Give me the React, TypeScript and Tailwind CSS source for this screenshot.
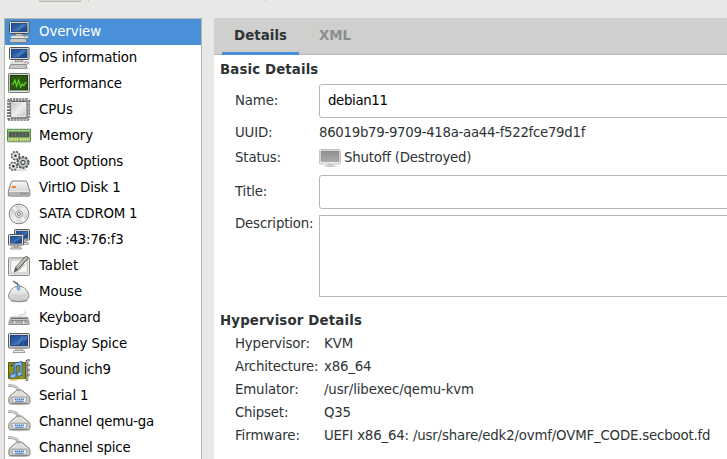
import type { ReactNode } from "react";

function Defs() {
  return (
    <svg className="absolute h-0 w-0" aria-hidden="true">
      <defs>
        <linearGradient id="screen" x1="0" y1="0" x2="1" y2="1">
          <stop offset="0" stopColor="#1c4a91" />
          <stop offset="0.45" stopColor="#2f62ab" />
          <stop offset="0.55" stopColor="#4377ba" />
          <stop offset="0.7" stopColor="#1e4c92" />
          <stop offset="1" stopColor="#204f96" />
        </linearGradient>
        <linearGradient id="metal" x1="0" y1="0" x2="1" y2="1">
          <stop offset="0" stopColor="#b5b5b5" />
          <stop offset="0.5" stopColor="#efefef" />
          <stop offset="1" stopColor="#bdbdbd" />
        </linearGradient>
        <linearGradient id="shell" x1="0" y1="0" x2="0" y2="1">
          <stop offset="0" stopColor="#fafafa" />
          <stop offset="1" stopColor="#c4c4c2" />
        </linearGradient>
        <linearGradient id="off" x1="0" y1="0" x2="0" y2="1">
          <stop offset="0" stopColor="#8f8f8f" />
          <stop offset="1" stopColor="#aaaaaa" />
        </linearGradient>
      </defs>
    </svg>
  );
}

const computer = (
  <>
    <path d="M9 13h6l1 3H8z" fill="#c4c4c0" stroke="#666" strokeWidth=".6" />
    <path d="M4 16h15v2.200H4z" fill="#f4f4f2" stroke="#a5a5a0" strokeWidth=".6" />
    <rect x="2.500" y="1.500" width="19.500" height="12" rx="1" fill="#eeeeea" stroke="#51524f" />
    <rect x="4.500" y="3.300" width="15.500" height="8.400" fill="url(#screen)" stroke="#173b73" strokeWidth=".9" />
    <path d="M10 11.300l5-7.500h2l-5 7.500z" fill="#75a0d2" opacity=".35" />
    <path d="M3.500 18.800h15.200l1.500 3.400H2.200z" fill="#f2f2f0" stroke="#666863" strokeWidth=".9" />
    <path d="M4.200 20.300h14" stroke="#a5a6a2" strokeWidth="1" strokeDasharray="1.200 .4" />
    <path d="M17 16.800c2-2 5-.8 5 .2s-2 1.500-4 1.200" fill="#deded9" stroke="#8a8c87" strokeWidth=".9" />
  </>
);

const display = (
  <>
    <path d="M9 15h6l.5 4h-7z" fill="#deded9" stroke="#8a8a87" strokeWidth=".6" />
    <path d="M7.500 18.300h9l1.500 2.200H6z" fill="#efefec" stroke="#858783" strokeWidth=".8" />
    <rect x="1.500" y="1.500" width="21" height="14.500" rx="1" fill="#e4e4e0" stroke="#60615e" />
    <rect x="3.400" y="3.400" width="17.200" height="10.400" fill="url(#screen)" stroke="#163972" strokeWidth=".9" />
    <path d="M10 13l5-9.500h2l-5 9.500zM15 13l4-8h1l-4 8z" fill="#75a0d2" opacity=".35" />
  </>
);

const performance = (
  <>
    <rect x="1.500" y="1.500" width="21" height="19" rx="1" fill="#d5d6d1" stroke="#777974" />
    <rect x="3.400" y="3.400" width="17.200" height="14.500" fill="#28540f" stroke="#173508" strokeWidth=".9" />
    <path d="M6.500 4v13.500M10 4v13.500M13.500 4v13.500M17 4v13.500M4 7h16M4 10.500h16M4 14h16" stroke="#39691f" strokeWidth=".5" />
    <path d="M4.500 12h1.700l1.700-3.800 1.700 6 2-6 2 7 1.700-3.200 1.500 1.600 1.500-2.800h1.500" fill="none" stroke="#65dc24" strokeWidth="1.100" />
    <path d="M4 19.500h15" stroke="#f2f2ef" strokeWidth=".6" />
  </>
);

const cpu = (
  <>
    <rect x="1.700" y="1.700" width="20" height="19.700" rx="1.500" stroke="#50514e" strokeWidth="2.900" strokeDasharray="2 1.050" />
    <rect x="1.700" y="1.700" width="20" height="19.700" rx="1.500" stroke="#c2c2be" strokeWidth="1.600" strokeDasharray=".8 2.250" strokeDashoffset="-.6" />
    <rect x="3.700" y="3.500" width="16.300" height="16.300" rx="1" fill="url(#metal)" stroke="#666763" strokeWidth="1" />
    <rect x="4.900" y="4.700" width="13.900" height="13.900" fill="none" stroke="#eee" strokeWidth=".7" />
  </>
);

const memory = (
  <>
    <path d="M.5 5.300h23v12H.5z" fill="#86ba6c" stroke="#4c7d40" strokeWidth=".9" />
    <path d="M1.200 6.400h21.600" stroke="#acd994" strokeWidth="1" />
    <path d="M2.300 8.300h9.200v4.400H2.300zM12.700 8.300h9v4.400h-9z" fill="#555a54" stroke="#34482f" strokeWidth=".6" />
    <path d="M5.300 8.300v4.400M8.400 8.300v4.400M15.700 8.300v4.400M18.700 8.300v4.400" stroke="#7d837b" strokeWidth=".7" />
    <path d="M1.500 15.500h9.800M13 15.500h9.600" stroke="#f0df86" strokeWidth="2.500" strokeDasharray="1.100 .6" />
    <path d="M1 18.200h22" stroke="#b8bbb5" strokeWidth=".7" />
  </>
);

const gears = (
  <>
    <ellipse cx="14" cy="20" rx="7" ry="1.200" fill="#ddd" />
    <circle cx="8.500" cy="5.700" r="3.900" fill="#eee" stroke="#555753" strokeWidth="1.700" strokeDasharray="2.050 1.010" />
    <circle cx="8.500" cy="5.700" r="3.300" fill="#eeeeec" stroke="#777974" strokeWidth=".6" />
    <circle cx="8.500" cy="5.700" r="1.200" fill="#222" />
    <circle cx="6.300" cy="16.300" r="3.800" fill="#eee" stroke="#555753" strokeWidth="1.700" strokeDasharray="1.980 1" />
    <circle cx="6.300" cy="16.300" r="3.200" fill="#eeeeec" stroke="#777974" strokeWidth=".6" />
    <circle cx="6.300" cy="16.300" r="1.200" fill="#222" />
    <circle cx="16" cy="12.500" r="5.500" fill="#d3d7cf" stroke="#555753" strokeWidth="2.200" strokeDasharray="2.150 1.300" />
    <circle cx="16" cy="12.500" r="4.800" fill="#c9cac6" stroke="#666863" strokeWidth=".8" />
    <circle cx="16" cy="12.500" r="2.200" fill="#9cb8d6" stroke="#444641" strokeWidth="1" />
    <circle cx="16" cy="12.500" r="1" fill="#eee" />
  </>
);

const disk = (
  <>
    <path d="M6 5h12.500c.8 0 1.200.4 1.400 1.100l3 9v4c0 .7-.4 1-1 1H2.300c-.6 0-1-.3-1-1v-4l3-9C4.600 5.400 5 5 6 5z" fill="url(#shell)" stroke="#7c7d79" strokeWidth="1" />
    <path d="M1.900 15.500h20.400v3.800H1.900z" fill="#b2b3af" />
    <path d="M2 15.300h20.300" stroke="#fff" strokeWidth=".8" />
    <path d="M13 17.500h7.500" stroke="#777974" strokeWidth="1.500" strokeDasharray=".7 .7" />
    <path d="M5.300 10h3.400v2H4.900z" fill="#ee7624" />
  </>
);

const cdrom = (
  <>
    <circle cx="12" cy="12" r="9.800" fill="url(#metal)" stroke="#7c7d79" strokeWidth="1" />
    <circle cx="12" cy="12" r="8.800" fill="none" stroke="#f5f5f3" strokeWidth=".6" />
    <path d="M12 12L5 6l3-2.200zM12 12l7 6-3 2.200z" fill="#fff" opacity=".75" />
    <circle cx="12" cy="12" r="3.500" fill="#eeeeec" stroke="#8f908c" strokeWidth=".9" />
    <circle cx="12" cy="12" r="1.500" fill="#fff" stroke="#73746f" strokeWidth=".9" />
  </>
);

const nic = (
  <>
    <rect x="7.500" y="1.500" width="15" height="10.500" rx=".8" fill="#e4e4e0" stroke="#555753" />
    <rect x="9.200" y="3.200" width="11.600" height="7" fill="url(#screen)" stroke="#163972" strokeWidth=".7" />
    <path d="M15 12h4v2h-4zM13 14.500h8l.7 1.800h-9z" fill="#e5e5e1" stroke="#777974" strokeWidth=".7" />
    <rect x="1.500" y="6.500" width="15" height="10.500" rx=".8" fill="#eeeeea" stroke="#555753" />
    <rect x="3.300" y="8.300" width="11.400" height="6.900" fill="url(#screen)" stroke="#163972" strokeWidth=".7" />
    <path d="M7 17h4v2H7zM4.500 19h9l1 2h-11z" fill="#eeeeec" stroke="#777974" strokeWidth=".8" />
  </>
);

const tablet = (
  <>
    <rect x="1.500" y="3.800" width="21" height="17.700" rx="1" fill="#e4e4e2" stroke="#8a8b87" />
    <path d="M3.700 6h16.600v13H3.700z" fill="#f6f6f4" stroke="#b5b6b2" strokeWidth=".8" />
    <path d="M9.500 18l8-8" stroke="#999" strokeWidth="2" opacity=".5" />
    <path d="M7.300 18l1.500-5L18.500 2.500c1-.9 3.200.8 2.500 2L11.500 15z" fill="#a5a6a2" stroke="#555753" strokeWidth=".9" />
    <path d="M10 12.900L19.200 3.300" stroke="#eee" strokeWidth=".9" />
    <path d="M7 18.500l1.500-4.800 2.500 1.800z" fill="#555753" />
  </>
);

const mouse = (
  <>
    <path d="M6.500.7c-.4 2 4.800 1.300 4.700 5" fill="none" stroke="#555753" strokeWidth="1.300" />
    <ellipse cx="12" cy="21" rx="9" ry="1.500" fill="#c0c0be" />
    <path d="M11.700 6C6 6 1.600 12 1.600 16c0 4 4 5.500 10 5.500s10.300-1.500 10.300-5.500c0-4-4.400-10-10.200-10z" fill="url(#shell)" stroke="#8a8b87" strokeWidth="1" />
    <path d="M4 14.500c4.500 2.200 11.200 2.200 15.500 0" fill="none" stroke="#c0c1bd" strokeWidth=".6" />
    <ellipse cx="11.500" cy="7.500" rx="1.500" ry="2.900" fill="#8fb9e8" stroke="#4979af" strokeWidth=".7" />
  </>
);

const keyboard = (
  <>
    <path d="M12 10.500c-.5-2.600 2-1.800 4-1.800 3 0 4-2.600 1-2.900" fill="none" stroke="#aaaba7" strokeWidth=".7" />
    <path d="M4 11.200h16.500l1.500 5.500v1.500H1.800v-1.500z" fill="#e6e6e3" stroke="#777974" strokeWidth=".8" />
    <path d="M4.500 12.500H20M3.800 14.200h16.700M3 16h4M8.500 16H16M17.500 16h4" stroke="#50524e" strokeWidth="1.100" strokeDasharray="1.500 .3" />
    <path d="M1.700 18.400h20.600" stroke="#8b8c88" strokeWidth="1" />
  </>
);

const sound = (
  <>
    <path d="M1.500 4.500h17v16h-17z" fill="#838e1c" stroke="#525b10" strokeWidth="1" />
    <path d="M3 6h3.500v3H3zM3 11h2v2H3zM11.500 13.500h4v5h-4z" fill="#454922" stroke="#a9b13a" strokeWidth=".7" />
    <path d="M3 21h7v1H3zM12 21h5" fill="#ddbd45" stroke="#ddbd45" />
    <path d="M20 22.700V3l2.800-.8" fill="none" stroke="#50524e" strokeWidth="2.400" />
    <path d="M20 22.200V3.300l2.500-.7" fill="none" stroke="#e4e4e0" strokeWidth="1" />
    <path d="M20.500 6h1.800v2h-1.800zM20.500 11h1.800v2h-1.800zM20.500 16h1.800v2h-1.800z" fill="#ccc" stroke="#555753" strokeWidth=".6" />
    <path d="M7.300 5.300L15 3.500v12c0 3-5 3.500-5 1s2.300-2.500 3-2.500V7.200l-4 .8v9.500c0 3-6 3.500-6 1s2.700-3 4.300-2.500z" fill="#8dbcf0" stroke="#285b9c" strokeWidth=".9" />
  </>
);

const serial = (
  <>
    <ellipse cx="12.300" cy="20" rx="10.500" ry="1.200" fill="#b5b6b3" />
    <path d="M1.300 1.700C8 1.200 11 3 12.500 8" fill="none" stroke="#8f918d" strokeWidth="3" />
    <path d="M1.300 1.400C8 .9 11.300 3 12.700 8" fill="none" stroke="#cfcfcc" strokeWidth="1.600" />
    <path d="M9.800 6h4.700l7.500 6.200c.9.800 1 1.600 1 3.300v2.500c0 1-.6 1.500-1.500 1.500H3.300c-1 0-1.500-.5-1.500-1.500v-2.500c0-1.500.2-2.400 1-3.200z" fill="#c6c7c3" stroke="#858682" strokeWidth="1" />
    <path d="M10.500 7.200l-6 5.400h15.700L14 7.200z" fill="#dcdcd9" />
    <path d="M10.300 7.500l-6 5.300M14.200 7.500l6 5.300" stroke="#f8f8f6" strokeWidth="1" />
    <path d="M4.800 13.300h15.200l-1.400 5.400H6.300z" fill="#f4f4f2" stroke="#8f908c" strokeWidth=".8" />
    <path d="M7.500 15.200h10M8.200 17.200h8.500" stroke="#447fcc" strokeWidth="1.600" strokeDasharray="1.600 .4" />
  </>
);

type Device = { label: string; icon: ReactNode; tracking: string };

const devices: Device[] = [
  { label: "Overview", icon: computer, tracking: "tracking-[-0.1px]" },
  { label: "OS information", icon: computer, tracking: "tracking-[-0.14px]" },
  { label: "Performance", icon: performance, tracking: "tracking-[-0.14px]" },
  { label: "CPUs", icon: cpu, tracking: "tracking-normal" },
  { label: "Memory", icon: memory, tracking: "tracking-normal" },
  { label: "Boot Options", icon: gears, tracking: "tracking-[-0.2px]" },
  { label: "VirtIO Disk 1", icon: disk, tracking: "tracking-[-0.12px]" },
  { label: "SATA CDROM 1", icon: cdrom, tracking: "tracking-[-0.2px]" },
  { label: "NIC :43:76:f3", icon: nic, tracking: "tracking-[-0.28px]" },
  { label: "Tablet", icon: tablet, tracking: "tracking-[-0.1px]" },
  { label: "Mouse", icon: mouse, tracking: "tracking-normal" },
  { label: "Keyboard", icon: keyboard, tracking: "tracking-[-0.15px]" },
  { label: "Display Spice", icon: display, tracking: "tracking-[-0.12px]" },
  { label: "Sound ich9", icon: sound, tracking: "tracking-[-0.25px]" },
  { label: "Serial 1", icon: serial, tracking: "tracking-[-0.12px]" },
  { label: "Channel qemu-ga", icon: serial, tracking: "tracking-[-0.24px]" },
  { label: "Channel spice", icon: serial, tracking: "tracking-[-0.16px]" },
];

const hypervisor = [
  { name: "Hypervisor:", value: "KVM", nameTracking: "tracking-[-0.16px]", valueTracking: "tracking-normal" },
  { name: "Architecture:", value: "x86_64", nameTracking: "tracking-[-0.22px]", valueTracking: "tracking-[-0.2px]" },
  { name: "Emulator:", value: "/usr/libexec/qemu-kvm", nameTracking: "tracking-[-0.15px]", valueTracking: "tracking-[-0.13px]" },
  { name: "Chipset:", value: "Q35", nameTracking: "tracking-[-0.2px]", valueTracking: "tracking-[-0.2px]" },
  {
    name: "Firmware:",
    value: "UEFI x86_64: /usr/share/edk2/ovmf/OVMF_CODE.secboot.fd",
    nameTracking: "tracking-[-0.08px]",
    valueTracking: "tracking-[-0.175px]",
  },
];

function Sidebar() {
  return (
    <nav className="ml-1 h-[445px] w-[198px] shrink-0 border border-[#b6b6b3] bg-white">
      {devices.map((device, i) => (
        <div
          key={device.label}
          className={`flex h-[26px] items-center gap-2 pl-0.5 ${i === 0 ? "bg-[#4a90d9] text-white" : "text-black"}`}
        >
          <svg viewBox="0 0 24 24" className="h-6 w-6 shrink-0" fill="none">
            {device.icon}
          </svg>
          <span className={device.tracking}>{device.label}</span>
        </div>
      ))}
    </nav>
  );
}

function Row({ label, className, children }: { label: string; className: string; children: ReactNode }) {
  return (
    <div className={`flex items-center ${className}`}>
      <span className="w-[84px] shrink-0 tracking-[-0.15px]">{label}</span>
      {children}
    </div>
  );
}

export default function App() {
  return (
    <div className="flex h-[459px] w-[727px] flex-col overflow-hidden bg-[#e8e8e7] font-['DejaVu_Sans',sans-serif] text-[13.333px] leading-[16px] whitespace-nowrap text-[#2e3436]">
      <Defs />
      <div className="flex h-[18px] shrink-0 items-start">
        <div className="ml-[39px] h-0.5 w-[42px] rounded-b-[3px] border border-t-0 border-[#b6b6b3] bg-[#d6d6d4]" />
        <div className="ml-[7px] h-0.5 w-px bg-[#cdcdca]" />
        <div className="ml-[176px] h-0.5 w-px bg-[#cdcdca]" />
      </div>
      <div className="flex">
        <Sidebar />
        <main className="ml-3 h-[441px] w-[513px] shrink-0 bg-white">
          <div className="flex h-[37px] border-b border-[#b6b6b3] bg-[#cfcfcd] pl-2 font-bold">
            <div className="-mb-px h-[37px] w-[77px] border-b-[3px] border-[#4a90d9] pt-2.5 pl-3 tracking-[0.08px]">Details</div>
            <div className="pt-2.5 pl-5 text-[#8b8e8f]">XML</div>
          </div>
          <h2 className="mt-[7px] ml-1.5 h-4 font-bold tracking-[0.13px]">Basic Details</h2>
          <section className="mt-1.5 ml-[21px]">
            <Row label="Name:" className="h-[34px]">
              <div className="flex h-[34px] w-[430px] shrink-0 items-center rounded-[3px] border border-[#b6b6b3] pl-2 tracking-[-0.35px] text-black">
                debian11
              </div>
            </Row>
            <Row label="UUID:" className="mt-[7px] h-4">
              <span className="tracking-[-0.3px]">86019b79-9709-418a-aa44-f522fce79d1f</span>
            </Row>
            <Row label="Status:" className="mt-1.5 h-[22px]">
              <svg viewBox="0 0 22 22" className="mt-0.5 mr-[3px] h-[22px] w-[22px]">
                <path d="M8 15h6v3H8z" fill="#d4d4d4" />
                <ellipse cx="11" cy="18" rx="6" ry="1.200" fill="#cfcfcf" />
                <rect x=".5" y="1.500" width="21" height="14.500" rx="1" fill="#ededed" stroke="#c4c4c4" />
                <rect x="2" y="3" width="18" height="10.500" fill="url(#off)" stroke="#8b8b8b" strokeWidth=".5" />
              </svg>
              <span className="tracking-[-0.21px]">Shutoff (Destroyed)</span>
            </Row>
            <Row label="Title:" className="mt-1.5 h-[34px]">
              <div className="h-[34px] w-[430px] shrink-0 rounded-[3px] border border-[#b6b6b3]" />
            </Row>
            <div className="mt-1.5 flex">
              <span className="w-[84px] shrink-0 pt-px tracking-[-0.17px]">Description:</span>
              <div className="h-[82px] w-[430px] shrink-0 border border-[#b6b6b3]" />
            </div>
          </section>
          <h2 className="mt-4 ml-1.5 h-4 font-bold tracking-[0.16px]">Hypervisor Details</h2>
          <dl className="mt-[7px] ml-[21px] flex flex-col gap-[7px]">
            {hypervisor.map((row) => (
              <div key={row.name} className="flex">
                <dt className={`w-[89px] shrink-0 ${row.nameTracking}`}>{row.name}</dt>
                <dd className={row.valueTracking}>{row.value}</dd>
              </div>
            ))}
          </dl>
        </main>
      </div>
    </div>
  );
}
